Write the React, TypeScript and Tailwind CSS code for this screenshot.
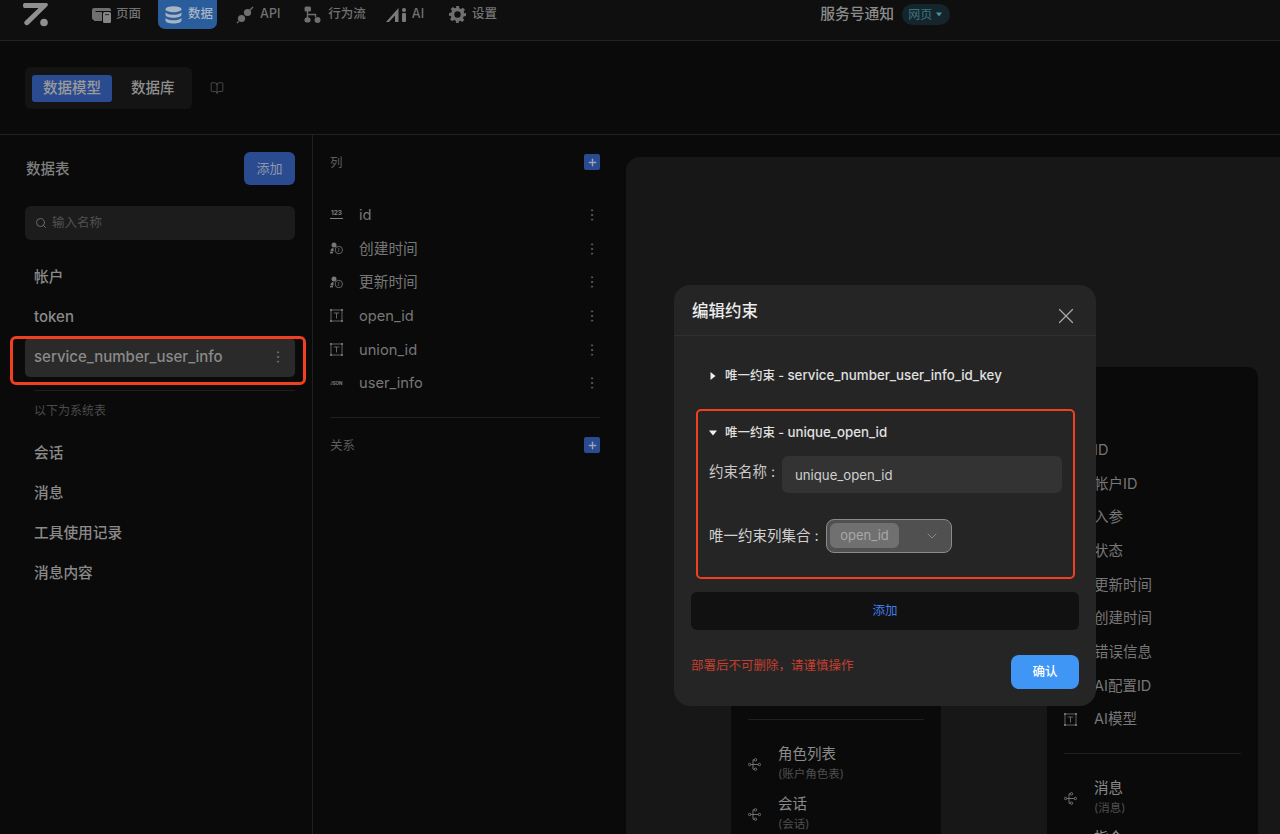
import { BookOpen, ChevronDown, MoreVertical, Plus, Search, X } from "lucide-react"

const font = { fontFamily: '"Inter", "Noto Sans CJK SC", sans-serif' }

const LogoIcon = () => (
    <svg width="26" height="26" viewBox="0 0 26 26" fill="#8f8f8f">
        <path d="M1.5 2h21.6c1.6 0 2.4 1.9 1.3 3L5.6 23.6c-1 1-2.6 1-3.6 0-1-1-1-2.5 0-3.5L15.6 7H1.5C.5 7 0 6 0 4.5S.5 2 1.5 2z" />
        <circle cx="21" cy="21.5" r="3.8" />
    </svg>
)

const PageIcon = () => (
    <svg width="19" height="16" viewBox="0 0 19 16" fill="#6f6f6f">
        <path d="M2 1h15a2 2 0 0 1 2 2v1H3.5v9H2a2 2 0 0 1-2-2V3a2 2 0 0 1 2-2z" />
        <path d="M2 5h8v9H2z" />
        <rect x="11" y="5" width="8" height="11" rx="1.5" fill="#858585" />
        <rect x="13" y="7" width="4" height="1.2" fill="#333" />
    </svg>
)

const DbIcon = () => (
    <svg width="17" height="18" viewBox="0 0 17 18" fill="#a8b4c4">
        <ellipse cx="8.5" cy="3.2" rx="8" ry="3" />
        <path d="M.5 6.4c1.4 1.6 4.6 2.3 8 2.3s6.600-.7 8-2.3v2.300c0 1.700-3.600 3-8 3s-8-1.300-8-3z" />
        <path d="M.5 12c1.400 1.600 4.600 2.300 8 2.300s6.600-.7 8-2.300v2.500c0 1.700-3.600 3-8 3s-8-1.300-8-3z" />
    </svg>
)

const ApiIcon = () => (
    <svg width="18" height="18" viewBox="0 0 18 18" fill="#6f6f6f">
        <circle cx="11.500" cy="6.500" r="3.600" />
        <circle cx="5.500" cy="12.500" r="3.600" />
        <path d="M14 4l3-3M2.500 15.500L1 17" stroke="#6f6f6f" strokeWidth="1.400" />
    </svg>
)

const FlowIcon = () => (
    <svg width="17" height="17" viewBox="0 0 17 17" fill="#6f6f6f">
        <rect x="0.500" y="0.500" width="6.500" height="5" rx="1.500" />
        <rect x="0.500" y="11.500" width="6" height="5" rx="2" />
        <circle cx="13.500" cy="14" r="3" />
        <path d="M3.500 5v7M3.500 8.500h8V11" stroke="#6f6f6f" strokeWidth="1.400" fill="none" />
    </svg>
)

const AiIcon = () => (
    <svg width="21" height="16" viewBox="0 0 21 16" fill="#7a7a7a">
        <path d="M12.500 1v14H9V8.500L3 15H0z" />
        <circle cx="18" cy="3" r="2" />
        <rect x="16" y="6" width="4" height="9" rx="1" />
    </svg>
)

const GearIcon = () => (
    <svg width="17" height="17" viewBox="0 0 24 24" fill="#6f6f6f">
        <path
            fillRule="evenodd"
            d="M10 0h4l.7 3.300 2.200.9 2.800-1.800 2.800 2.800-1.800 2.800.9 2.200L24 10v4l-3.400.7-.9 2.200 1.800 2.800-2.800 2.800-2.800-1.800-2.200.9L14 24h-4l-.7-3.400-2.200-.9-2.800 1.800-2.800-2.800 1.800-2.800-.9-2.200L0 14v-4l3.400-.8.9-2.200-1.800-2.800 2.800-2.800 2.800 1.800 2.200-.9zM12 7.500a4.500 4.500 0 1 0 0 9 4.500 4.500 0 0 0 0-9z"
        />
    </svg>
)

const TextIcon = () => (
    <svg width="13" height="13" viewBox="0 0 13 13" fill="none" stroke="#6e6e6e" strokeWidth="0.9">
        <rect x="1" y="1" width="11" height="11" />
        <path d="M3.800 4h5.400M6.500 4v5.500" />
        <g fill="#6e6e6e" stroke="none">
            <rect x="0" y="0" width="2" height="2" />
            <rect x="11" y="0" width="2" height="2" />
            <rect x="0" y="11" width="2" height="2" />
            <rect x="11" y="11" width="2" height="2" />
        </g>
    </svg>
)

const TimeIcon = () => (
    <svg width="13" height="13" viewBox="0 0 13 13" fill="none">
        <circle cx="4" cy="3" r="2.500" fill="#777" />
        <path d="M0.500 9c0-2 1.500-3 3-3v3.500H0.500z" fill="#777" />
        <rect x="0" y="10" width="3" height="1.400" fill="#777" />
        <circle cx="8.800" cy="8" r="3.700" stroke="#6e6e6e" strokeWidth="0.900" />
        <path d="M8.800 6v2.300L7.800 10" stroke="#6e6e6e" strokeWidth="0.800" />
    </svg>
)

const NumberIcon = () => (
    <div className="w-[13px] flex flex-col items-center">
        <span className="text-[6.500px] leading-[7px] font-bold text-[#808080]">123</span>
        <span className="w-[13px] h-px bg-[#808080] mt-[1px]" />
    </div>
)

const JsonIcon = () => (
    <span className="w-[13px] text-[4.500px] leading-[7px] font-bold text-[#808080]">JSON</span>
)

const RelationIcon = () => (
    <svg width="13" height="13" viewBox="0 0 13 13" fill="none" stroke="#7c7c7c" strokeWidth="0.900">
        <circle cx="1.600" cy="6.500" r="1.200" />
        <circle cx="7.500" cy="1.800" r="1.200" />
        <circle cx="7.500" cy="11.200" r="1.200" />
        <circle cx="11.400" cy="6.500" r="1.200" />
        <path d="M2.800 6.500h7.400M6.300 1.800H5v9.400h1.300" />
    </svg>
)

const AddSquare = () => (
    <button className="w-4 h-4 rounded-[2px] bg-[#2a4b90] flex items-center justify-center">
        <Plus size={11} strokeWidth={3} color="#9aa5ba" />
    </button>
)

const Caret = ({ open }: { open?: boolean }) => (
    <svg width="8" height="8" viewBox="0 0 8 8" fill="#f0f0f0">
        {open ? <path d="M0 1.500h8L4 6.500z" /> : <path d="M1.500 0v8l5-4z" />}
    </svg>
)

const navItems = [
    { label: "页面", icon: <PageIcon />, gap: "gap-[5px]", width: "ml-[43px]" },
    { label: "API", icon: <ApiIcon />, gap: "gap-[6px]", width: "ml-[19px]" },
    { label: "行为流", icon: <FlowIcon />, gap: "gap-[7px]", width: "ml-[24px]" },
    { label: "AI", icon: <AiIcon />, gap: "gap-[5px]", width: "ml-[20px]" },
    { label: "设置", icon: <GearIcon />, gap: "gap-[6px]", width: "ml-[25px]" },
]

const columns = [
    { name: "id", icon: <NumberIcon /> },
    { name: "创建时间", icon: <TimeIcon /> },
    { name: "更新时间", icon: <TimeIcon /> },
    { name: "open_id", icon: <TextIcon /> },
    { name: "union_id", icon: <TextIcon /> },
    { name: "user_info", icon: <JsonIcon /> },
]

const systemTables = ["会话", "消息", "工具使用记录", "消息内容"]

const rightCardRows = ["ID", "帐户ID", "入参", "状态", "更新时间", "创建时间", "错误信息", "AI配置ID", "AI模型"]

const Relation = ({ name, sub }: { name: string; sub: string }) => (
    <div className="flex items-center h-[50px] gap-[17px]">
        <RelationIcon />
        <div className="flex flex-col">
            <span className="text-[14.500px] leading-[20px] text-[#8a8a8a]">{name}</span>
            <span className="text-[11.500px] leading-[20px] text-[#4f4f4f]">{sub}</span>
        </div>
    </div>
)

const TopBar = () => (
    <header className="h-[41px] shrink-0 bg-[#0f0f0f] border-b border-[#222222] flex items-start pl-[23px]">
        <div className="mt-[1px]">
            <LogoIcon />
        </div>
        <div className={`${navItems[0].width} flex items-center h-[29px] ${navItems[0].gap}`}>
            {navItems[0].icon}
            <span className="text-[12.500px] font-medium text-[#727272]">{navItems[0].label}</span>
        </div>
        <div className="ml-[17px] h-[29px] w-[59px] rounded-b-[7px] bg-[#2a5d9c] flex items-center pl-[7px] gap-[6px]">
            <DbIcon />
            <span className="text-[12.500px] font-medium text-[#a8b4c4]">数据</span>
        </div>
        {navItems.slice(1).map((item) => (
            <div key={item.label} className={`${item.width} flex items-center h-[29px] ${item.gap}`}>
                {item.icon}
                <span className="text-[12.500px] font-medium text-[#727272]">{item.label}</span>
            </div>
        ))}
        <div className="ml-[323px] h-[29px] flex items-center">
            <span className="text-[14.800px] font-medium text-[#8c8c8c]">服务号通知</span>
            <div className="ml-2 h-[21px] w-[48px] rounded-full bg-[#14262b] flex items-center pl-[6px] gap-[4px]">
                <span className="text-[12px] text-[#3f7383]">网页</span>
                <svg width="6" height="5" viewBox="0 0 6 5" fill="#4c8ea3">
                    <path d="M0 .5h6L3 4.500z" />
                </svg>
            </div>
        </div>
    </header>
)

const SubBar = () => (
    <div className="h-[94px] shrink-0 border-b border-[#222222] flex items-center pl-[25px] pt-[1px]">
        <div className="h-[42px] w-[167px] rounded-[6px] bg-[#141414] flex items-center pl-[7px]">
            <span className="w-[80px] h-[27px] rounded-[3px] bg-[#2a4b90] flex items-center justify-center text-[14.500px] font-medium text-[#9a9a9a]">
                数据模型
            </span>
            <span className="ml-[19px] text-[14.500px] font-medium text-[#8f8f8f]">数据库</span>
        </div>
        <BookOpen size={14} strokeWidth={1.300} color="#5a5a5a" className="ml-[18px]" />
    </div>
)

const TableList = () => (
    <aside className="relative w-[313px] shrink-0 border-r border-[#1f1f1f] pl-[25px] pr-[17px] pt-[17px]">
        <div className="flex items-center justify-between h-[33px]">
            <span className="pl-px text-[14.500px] font-medium text-[#7f7f7f]">数据表</span>
            <button className="w-[51px] h-[33px] rounded-[6px] bg-[#2a4b90] text-[13px] text-[#8f98a8]">添加</button>
        </div>
        <div className="mt-[21px] h-[34px] rounded-[6px] bg-[#1c1c1c] flex items-center pl-[10px] gap-[5px]">
            <Search size={12} color="#6a6a6a" />
            <span className="pt-px text-[12.500px] text-[#505050]">输入名称</span>
        </div>
        <div className="mt-[18px] flex flex-col font-medium text-[14.700px] text-[#8a8a8a]">
            <div className="h-[40px] flex items-center pl-[9px] pb-[1px]">帐户</div>
            <div className="h-[40px] flex items-center pl-[9px] pb-[1px] text-[15px]">token</div>
            <div className="h-[39px] flex items-center pl-[9px] pr-[9px] pb-[1px] justify-between rounded-[5px] bg-[#2a2a2a] text-[15px]">
                service_number_user_info
                <MoreVertical size={16} strokeWidth={1.500} color="#6f6f6f" />
            </div>
        </div>
        <div className="mt-[13px] ml-[9px] h-px bg-[#1f1f1f]" />
        <div className="mt-[12px] pl-[9px] text-[12px] leading-[16px] text-[#4a4a4a]">以下为系统表</div>
        <div className="mt-[14px] flex flex-col text-[14.700px] font-medium text-[#8a8a8a]">
            {systemTables.map((name) => (
                <div key={name} className="h-[40px] flex items-center pl-[9px]">
                    {name}
                </div>
            ))}
        </div>
        <div className="absolute left-[10px] top-[201px] w-[296px] h-[49px] border-[3px] border-[#f0401f] rounded-[6px]" />
    </aside>
)

const ColumnList = () => (
    <section className="w-[313px] shrink-0 pl-[17px] pr-[26px] pt-[19px]">
        <div className="flex items-center justify-between h-4">
            <span className="pt-[2px] text-[12.500px] text-[#5c5c5c]">列</span>
            <AddSquare />
        </div>
        <div className="mt-[28px] flex flex-col">
            {columns.map((col) => (
                <div key={col.name} className="h-[33.700px] flex items-center">
                    <div className="w-[29px] flex items-center">{col.icon}</div>
                    <span className="flex-1 text-[14.700px] text-[#777777]">{col.name}</span>
                    <MoreVertical size={16} strokeWidth={1.500} color="#5f5f5f" />
                </div>
            ))}
        </div>
        <div className="mt-[17px] h-px bg-[#1f1f1f]" />
        <div className="mt-[19px] flex items-center justify-between h-4">
            <span className="pt-[2px] text-[12.500px] text-[#5c5c5c]">关系</span>
            <AddSquare />
        </div>
    </section>
)

const Canvas = () => (
    <main className="relative flex-1 mt-[22px] rounded-tl-[14px] bg-[#171717] overflow-hidden">
        <div className="absolute left-[105px] top-[243px] w-[210px] h-[500px] rounded-[10px] bg-[#0a0a0a] px-[17px]">
            <div className="mt-[319px] h-px bg-[#1f1f1f]" />
            <div className="mt-[19px] flex flex-col">
                <Relation name="角色列表" sub="(账户角色表)" />
                <Relation name="会话" sub="(会话)" />
            </div>
        </div>
        <div className="absolute left-[421px] top-[210px] w-[211px] h-[600px] rounded-[10px] bg-[#0a0a0a] px-[17px] pt-[66px]">
            {rightCardRows.map((row) => (
                <div key={row} className="h-[33.700px] flex items-center gap-[17px]">
                    <TextIcon />
                    <span className="text-[14.500px] text-[#777777]">{row}</span>
                </div>
            ))}
            <div className="mt-[17px] h-px bg-[#1f1f1f]" />
            <div className="mt-[19px] flex flex-col">
                <Relation name="消息" sub="(消息)" />
                <Relation name="指令" sub="(指令)" />
            </div>
        </div>
    </main>
)

const EditDialog = () => (
    <div className="absolute left-[674px] top-[285px] w-[422px] h-[421px] rounded-[16px] bg-[#252525] flex flex-col">
        <div className="h-[51px] shrink-0 border-b border-[#303030] flex items-center justify-between pl-[18px] pr-[17px]">
            <span className="pt-[2px] text-[16.500px] font-medium text-[#ececec]">编辑约束</span>
            <X size={26} strokeWidth={1.100} color="#a8a8a8" className="mt-[12px]" />
        </div>
        <div className="h-[73px] shrink-0 flex items-center gap-[8px] pl-[35px] pt-[7px] text-[12.500px] font-medium text-[#e0e0e0]">
            <Caret />
            <span>
                唯一约束 - <span className="text-[13.300px]">service_number_user_info_id_key</span>
            </span>
        </div>
        <div className="mx-[22px] w-[379px] h-[170px] shrink-0 border-[2px] border-[#f0401f] rounded-[5px] pl-[11px] pr-[11px]">
            <div className="mt-[12px] flex items-center gap-[8px] text-[12.500px] font-medium text-[#e0e0e0]">
                <Caret open />
                <span>
                    唯一约束 - <span className="text-[13.300px]">unique_open_id</span>
                </span>
            </div>
            <div className="mt-[13px] flex items-center">
                <span className="w-[73px] pb-[5px] text-[14.500px] text-[#c8c8c8]">约束名称 :</span>
                <div className="w-[280px] h-[37px] rounded-[6px] bg-[#333333] flex items-center pl-[13px] pt-[2px] text-[13.200px] text-[#d0d0d0]">
                    unique_open_id
                </div>
            </div>
            <div className="mt-[26px] flex items-center">
                <span className="w-[117px] text-[14.500px] text-[#d0d0d0]">唯一约束列集合 :</span>
                <div className="w-[126px] h-[34px] rounded-[8px] border border-[#8a8a8a] bg-[#505050] flex items-center pl-[3px] pr-[11px] justify-between">
                    <span className="w-[69px] h-[25px] rounded-[6px] bg-[#707070] flex items-center justify-center text-[13px] text-[#a8a8a8]">
                        open_id
                    </span>
                    <ChevronDown size={16} strokeWidth={1.100} color="#999999" />
                </div>
            </div>
        </div>
        <button className="mx-[17px] mt-[13px] h-[38px] rounded-[6px] bg-[#111111] text-[12.500px] text-[#3f7fe8]">添加</button>
        <div className="mx-[17px] mt-[25px] flex items-start justify-between">
            <span className="mt-[2px] text-[12.500px] text-[#c43f30]">部署后不可删除，请谨慎操作</span>
            <button className="w-[68px] h-[34px] rounded-[8px] bg-[#4096f5] text-[12.500px] font-medium text-white">确认</button>
        </div>
    </div>
)

const App = () => {
    return (
        <div style={font} className="relative w-[1280px] h-[834px] overflow-hidden bg-[#0a0a0a] flex flex-col">
            <TopBar />
            <SubBar />
            <div className="flex-1 flex min-h-0">
                <TableList />
                <ColumnList />
                <Canvas />
            </div>
            <EditDialog />
        </div>
    )
}

export default App
